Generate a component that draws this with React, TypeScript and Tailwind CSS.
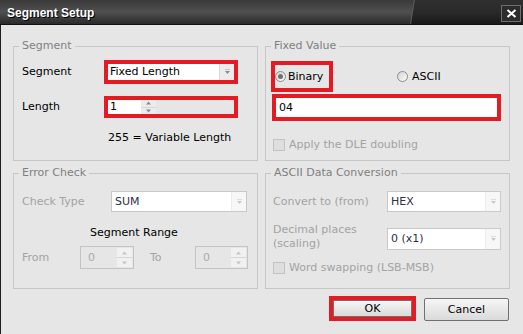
import type { ReactNode } from 'react';

const RED = 'border-4 border-[#e31b23]';

function Arrow({ faded = false }: { faded?: boolean }) {
  const c = faded ? '#c8c8c8' : '#8a8a8a';
  return (
    <svg width="7" height="6" viewBox="0 0 7 6">
      <rect x="1" y="0" width="5" height="1" fill={faded ? '#dddddd' : '#c4c4c4'} />
      <polygon points="1,2 6,2 3.5,5" fill={c} />
    </svg>
  );
}

function UpDown({ faded = false }: { faded?: boolean }) {
  const c = faded ? '#c4c4c4' : '#8a8a8a';
  return (
    <div className="flex flex-col w-[15px] h-full">
      <div className={`flex-1 flex items-center justify-center border-b ${faded ? 'bg-[#f1f1f1] border-[#d6d6d6]' : 'bg-[#ececec] border-[#d8d8d8]'}`}>
        <svg width="7" height="4" viewBox="0 0 7 4">
          <polygon points="1,3.5 6,3.5 3.5,0.5" fill={c} />
        </svg>
      </div>
      <div className={`flex-1 flex items-center justify-center ${faded ? 'bg-[#f1f1f1]' : 'bg-[#ececec]'}`}>
        <svg width="7" height="4" viewBox="0 0 7 4">
          <polygon points="1,0.5 6,0.5 3.5,3.5" fill={c} />
        </svg>
      </div>
    </div>
  );
}

function Combo({ value, disabled = false }: { value: string; disabled?: boolean }) {
  return (
    <div className={`flex h-full w-full bg-white ${disabled ? 'border border-[#c9c9c9]' : ''}`}>
      <div className={`flex-1 flex items-center ${disabled ? 'pl-[3px] text-[#2f2f3f]' : 'pl-[2px] text-black'}`}>{value}</div>
      <div className={`w-[15px] flex items-center justify-center border-l ${disabled ? 'bg-[#f7f7f7] border-[#ececec]' : 'bg-[#ececec] border-[#d6d6d6]'}`}>
        <Arrow faded={disabled} />
      </div>
    </div>
  );
}

function Spin({ value }: { value: string }) {
  return (
    <div className="flex h-full w-full border border-[#c3c3c3] bg-[#e6e6e6] p-[1px]">
      <div className="flex-1 flex items-center pl-[6px] text-[#aaaaaa]">{value}</div>
      <UpDown faded />
    </div>
  );
}

function Radio({ checked = false }: { checked?: boolean }) {
  return (
    <span className="w-[11px] h-[11px] rounded-full border border-[#8c8c8c] bg-gradient-to-br from-[#d4d4d4] to-[#fbfbfb] flex items-center justify-center">
      {checked && <span className="w-[5px] h-[5px] rounded-full bg-[#707070]" />}
    </span>
  );
}

function Check({ label }: { label: string }) {
  return (
    <div className="flex items-center h-[14px] gap-[4px] text-[#a3a3a3]">
      <span className="w-[12px] h-[12px] border border-[#c2c2c2] bg-[#dedede]" />
      <span>{label}</span>
    </div>
  );
}

function Group({ title, height, children }: { title: string; height: string; children: ReactNode }) {
  return (
    <fieldset className={`border border-[#c6c6c6] ${height}`}>
      <legend className="ml-[5px] px-[3px] text-[#7f7f7f] leading-[14px]">{title}</legend>
      {children}
    </fieldset>
  );
}

function TitleBar() {
  return (
    <div className="relative h-[25px] shrink-0 flex items-start justify-between overflow-hidden bg-gradient-to-b from-[#3a3a3a] via-[#505050] to-[#2a2a2a] border-b border-[#121212]">
      <div className="absolute top-0 bottom-0 left-[410px] w-[140px] origin-bottom-left -skew-x-9 border-l border-[#5a5a5a] bg-gradient-to-b from-[#2f2f2f] via-[#2a2a2a] to-[#191919]" />
      <span className="relative pl-[7px] pt-[6px] font-['Liberation_Sans',sans-serif] font-bold text-[12px] leading-[14px] text-white [text-shadow:1px_1px_0_#000]">
        Segment Setup
      </span>
      <div className="relative mt-[5px] mr-[2px] w-[20px] h-[17px] border border-[#6e6e6e] bg-[#2c2c2c] flex items-center justify-center">
        <svg width="11" height="9" viewBox="0 0 11 9">
          <path d="M1.5 1 L9.5 8 M9.5 1 L1.5 8" stroke="#ffffff" strokeWidth="2" />
        </svg>
      </div>
    </div>
  );
}

export default function App() {
  return (
    <div className="w-[523px] h-[334px] flex flex-col bg-[#e6e6e6] overflow-hidden font-['DejaVu_Sans',sans-serif] text-[11px] leading-[14px] text-black">
      <TitleBar />
      <div className="flex flex-1">
        <div className="w-[3px] bg-[#1d1d1d]" />
        <div className="flex-1 pl-[12px] pr-[13px] pt-[14px]">
          <div className="grid grid-cols-[245px_245px] gap-x-[7px] gap-y-[5px]">
            <Group title="Segment" height="h-[122px]">
              <div className="pt-[7px] pl-[8px]">
                <div className="flex items-center h-[24px]">
                  <span className="w-[82px]">Segment</span>
                  <div className={`w-[134px] h-[24px] ${RED}`}>
                    <Combo value="Fixed Length" />
                  </div>
                </div>
                <div className="flex items-center h-[22px] mt-[12px]">
                  <span className="w-[82px]">Length</span>
                  <div className={`w-[134px] h-[22px] ${RED} flex`}>
                    <div className="w-[33px] bg-white flex items-center pl-[2px]">1</div>
                    <UpDown />
                  </div>
                </div>
                <div className="mt-[13px] pl-[86px]">255 = Variable Length</div>
              </div>
            </Group>

            <Group title="Fixed Value" height="h-[122px]">
              <div className="pt-[8px] pl-[5px]">
                <div className="flex items-center h-[31px]">
                  <div className={`w-[62px] h-[31px] ${RED} flex items-center gap-[2px]`}>
                    <Radio checked />
                    <span>Binary</span>
                  </div>
                  <div className="ml-[64px] flex items-center gap-[4px]">
                    <Radio />
                    <span>ASCII</span>
                  </div>
                </div>
                <div className={`mt-[2px] ml-[1px] w-[229px] h-[27px] ${RED} bg-white flex items-center pl-[3px]`}>04</div>
                <div className="mt-[17px] ml-[2px]">
                  <Check label="Apply the DLE doubling" />
                </div>
              </div>
            </Group>

            <Group title="Error Check" height="h-[123px]">
              <div className="pt-[11px] pl-[8px]">
                <div className="flex items-center h-[21px]">
                  <span className="w-[89px] text-[#a3a3a3]">Check Type</span>
                  <div className="w-[136px] h-[21px]">
                    <Combo value="SUM" disabled />
                  </div>
                </div>
                <div className="mt-[14px] pl-[68px]">Segment Range</div>
                <div className="flex items-center h-[23px] mt-[6px] text-[#a3a3a3]">
                  <span className="w-[58px]">From</span>
                  <div className="w-[54px] h-[23px]">
                    <Spin value="0" />
                  </div>
                  <span className="ml-[16px] w-[45px]">To</span>
                  <div className="w-[53px] h-[23px]">
                    <Spin value="0" />
                  </div>
                </div>
              </div>
            </Group>

            <Group title="ASCII Data Conversion" height="h-[123px]">
              <div className="pt-[11px] pl-[7px]">
                <div className="flex items-center h-[21px]">
                  <span className="w-[114px] text-[#a3a3a3]">Convert to (from)</span>
                  <div className="w-[114px] h-[21px]">
                    <Combo value="HEX" disabled />
                  </div>
                </div>
                <div className="flex items-center h-[22px] mt-[16px]">
                  <span className="w-[114px] text-[#a3a3a3] -mt-[5px]">
                    Decimal places
                    <br />
                    (scaling)
                  </span>
                  <div className="w-[114px] h-[22px]">
                    <Combo value="0 (x1)" disabled />
                  </div>
                </div>
                <div className="mt-[11px]">
                  <Check label="Word swapping (LSB-MSB)" />
                </div>
              </div>
            </Group>
          </div>

          <div className="flex justify-end items-start gap-[8px] mt-[7px] pr-[1px]">
            <div className={`w-[87px] h-[25px] ${RED}`}>
              <div className="w-full h-full flex items-center justify-center border border-[#707070] bg-gradient-to-b from-[#f6f6f6] to-[#dadada]">
                OK
              </div>
            </div>
            <div className="mt-[2px] w-[85px] h-[23px] flex items-center justify-center rounded-[2px] border border-[#707070] bg-gradient-to-b from-[#f6f6f6] to-[#dadada]">
              Cancel
            </div>
          </div>
        </div>
      </div>
    </div>
  );
}
